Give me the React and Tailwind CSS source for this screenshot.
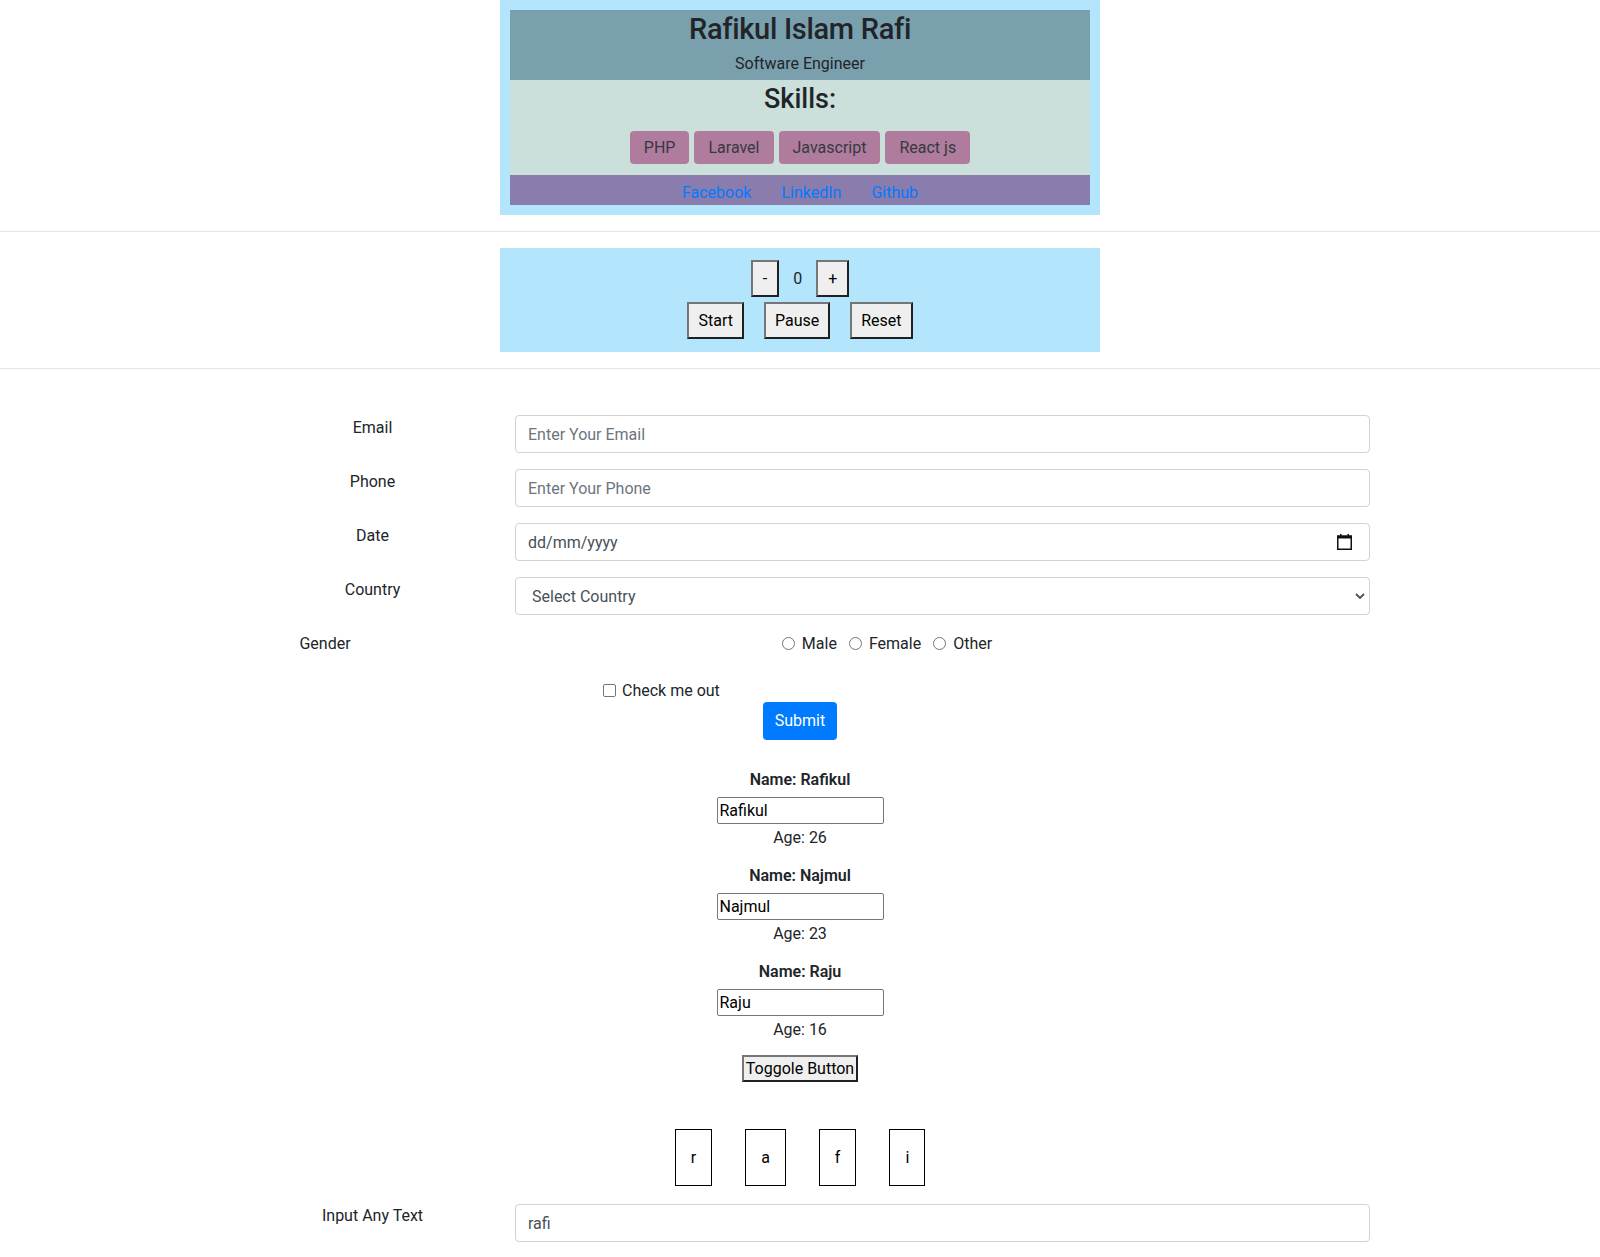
import React from "react";

function Radio({ label }) {
  return (
    <label className="flex items-center">
      <span className="inline-block w-[13px] h-[13px] rounded-full border border-[#767676] bg-white mr-[7px]" />
      <span>{label}</span>
    </label>
  );
}

function WinButton({ children, className = "" }) {
  return (
    <button
      className={
        "bg-[#efefef] border-2 border-t-[#767676] border-l-[#767676] border-r-[#202020] border-b-[#202020] text-black leading-6 " +
        className
      }
    >
      {children}
    </button>
  );
}

function Person({ name, age }) {
  return (
    <div className="flex flex-col items-center mb-[14px]">
      <div className="font-semibold leading-6">Name: {name}</div>
      <div className="mt-[5px] w-[167px] h-[27px] border border-[#767676] rounded-[2px] px-[2px] flex items-center text-black bg-white">
        {name}
      </div>
      <div className="mt-[2px] leading-6">Age: {age}</div>
    </div>
  );
}

export default function App() {
  return (
    <div className="font-['Roboto',sans-serif] text-[16px] leading-6 text-[#212529] bg-white min-h-[1257px]">
      {/* Profile card */}
      <div className="mx-auto w-[600px] bg-[#b3e5fc] p-[10px]">
        <div className="bg-[#7aa0ae] h-[70px] flex flex-col items-center">
          <h1 className="text-[29px] font-medium tracking-[-0.3px] leading-[38px]">Rafikul Islam Rafi</h1>
          <p className="mt-[4px] leading-6">Software Engineer</p>
        </div>
        <div className="bg-[#cbe0db] h-[95px] flex flex-col items-center pt-[2px]">
          <h2 className="text-[27px] font-medium leading-[34px]">Skills:</h2>
          <div className="mt-[15px] flex gap-[5px]">
            {["PHP", "Laravel", "Javascript", "React js"].map((s) => (
              <span key={s} className="h-[33px] px-[14px] flex items-center rounded-[4px] bg-[#b07c9e] text-[#343a40]">
                {s}
              </span>
            ))}
          </div>
        </div>
        <div className="bg-[#8a7cad] h-[30px] flex justify-center gap-[30px] pt-[6px] leading-6">
          <a className="text-[#007bff]">Facebook</a>
          <a className="text-[#007bff]">LinkedIn</a>
          <a className="text-[#007bff]">Github</a>
        </div>
      </div>

      <div className="mt-4 h-px bg-[#e5e5e5]" />

      {/* Counter */}
      <div className="mt-4 mx-auto w-[600px] h-[104px] bg-[#b3e5fc] pt-[12px] flex flex-col items-center">
        <div className="flex items-center h-[37px]">
          <WinButton className="h-[37px] px-[10px]">-</WinButton>
          <span className="mx-[14px]">0</span>
          <WinButton className="h-[37px] px-[10px]">+</WinButton>
        </div>
        <div className="mt-[5px] flex gap-[20px]">
          <WinButton className="h-[37px] px-[9px]">Start</WinButton>
          <WinButton className="h-[37px] px-[9px]">Pause</WinButton>
          <WinButton className="h-[37px] px-[9px]">Reset</WinButton>
        </div>
      </div>

      <div className="mt-4 h-px bg-[#e5e5e5]" />

      {/* Form */}
      <div className="mx-auto w-[1140px] mt-[46px]">
        {[
          ["Email", "Enter Your Email"],
          ["Phone", "Enter Your Phone"],
        ].map(([l, p]) => (
          <div key={l} className="flex mb-4">
            <div className="w-[285px] text-center pt-[1px]">{l}</div>
            <div className="flex-1 h-[38px] border border-[#ced4da] rounded-[4px] px-3 pt-[2px] flex items-center text-[#6c757d]">
              {p}
            </div>
          </div>
        ))}
        <div className="flex mb-4">
          <div className="w-[285px] text-center pt-[1px]">Date</div>
          <div className="flex-1 h-[38px] border border-[#ced4da] rounded-[4px] pl-3 pr-[17px] flex items-center justify-between text-[#495057]">
            <span className="pt-[2px]">dd/mm/yyyy</span>
            <svg width="15" height="16" viewBox="0 0 15 16">
              <rect x="3" y="0" width="1.5" height="3" fill="#111" />
              <rect x="10.5" y="0" width="1.5" height="3" fill="#111" />
              <rect x="0.75" y="2" width="13.5" height="13.25" fill="none" stroke="#111" strokeWidth="1.5" />
              <rect x="0.75" y="2" width="13.5" height="2.5" fill="#111" />
            </svg>
          </div>
        </div>
        <div className="flex mb-4">
          <div className="w-[285px] text-center pt-[1px]">Country</div>
          <div className="flex-1 h-[38px] border border-[#ced4da] rounded-[4px] pl-4 pr-[4px] flex items-center justify-between text-[#495057]">
            <span className="pt-[2px]">Select Country</span>
            <svg width="10" height="6" viewBox="0 0 10 6">
              <path d="M1 1 L5 5 L9 1" fill="none" stroke="#495057" strokeWidth="1.8" />
            </svg>
          </div>
        </div>
        <div className="flex mb-[23px] h-[24px] pt-[1px]">
          <div className="w-[190px] text-center">Gender</div>
          <div className="flex-1 flex justify-center items-center gap-[12px] pr-[16px]">
            <Radio label="Male" />
            <Radio label="Female" />
            <Radio label="Other" />
          </div>
        </div>
        <div className="flex items-center ml-[373px] h-[24px] pt-[1px]">
          <span className="inline-block w-[13px] h-[13px] rounded-[2px] border border-[#767676] bg-white mr-[6px]" />
          <span>Check me out</span>
        </div>
        <div className="flex justify-center">
          <button className="h-[38px] px-3 rounded-[4px] bg-[#007bff] text-white leading-6">Submit</button>
        </div>
      </div>

      {/* People */}
      <div className="mt-[28px] flex flex-col items-center">
        <Person name="Rafikul" age="26" />
        <Person name="Najmul" age="23" />
        <Person name="Raju" age="16" />
        <WinButton className="-mt-px h-[27px] px-[2px] flex items-center">Toggole Button</WinButton>
      </div>

      {/* Letters */}
      <div className="mt-[47px] flex justify-center gap-[33px]">
        {["r", "a", "f", "i"].map((c) => (
          <div key={c} className="h-[57px] px-[15px] border border-black flex items-center justify-center text-black">
            {c}
          </div>
        ))}
      </div>

      <div className="mx-auto w-[1140px] mt-[18px] flex">
        <div className="w-[285px] text-center pt-0">Input Any Text</div>
        <div className="flex-1 h-[38px] border border-[#ced4da] rounded-[4px] px-3 pt-[2px] flex items-center text-[#495057]">
          rafi
        </div>
      </div>
    </div>
  );
}
